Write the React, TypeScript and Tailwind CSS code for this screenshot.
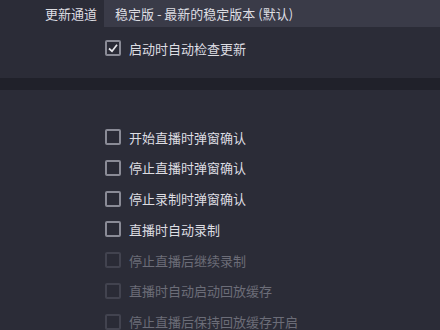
import React from 'react'

const items = [
  { label: '开始直播时弹窗确认', disabled: false },
  { label: '停止直播时弹窗确认', disabled: false },
  { label: '停止录制时弹窗确认', disabled: false },
  { label: '直播时自动录制', disabled: false },
  { label: '停止直播后继续录制', disabled: true },
  { label: '直播时自动启动回放缓存', disabled: true },
  { label: '停止直播后保持回放缓存开启', disabled: true },
]

// Small square checkbox drawn like the OBS dark theme.
function Box({ checked, disabled }: { checked?: boolean; disabled?: boolean }) {
  return (
    <span
      className={`flex h-4 w-4 shrink-0 items-center justify-center rounded-[2px] border-2 ${
        disabled ? 'border-[#42434f] bg-[#2a2b36]' : 'border-[#8a8b96] bg-[#2a2b36]'
      }`}
    >
      {checked && (
        <svg viewBox="0 0 12 12" className="h-3 w-3">
          <polyline points="2,6.5 5,9.2 10,2.8" fill="none" stroke="#e6e6ea" strokeWidth="1.7" />
        </svg>
      )}
    </span>
  )
}

export default function App() {
  return (
    <div
      className="h-[330px] w-[440px] overflow-hidden bg-[#2b2c37] text-[13px] leading-none text-[#dddde2]"
      style={{ fontFamily: '"Noto Sans CJK SC", "Noto Sans", sans-serif' }}
    >
      <section className="h-[78px]">
        <div className="flex h-[27px] items-stretch">
          <div className="flex w-[104px] items-center justify-end pr-[7px]">更新通道</div>
          <div className="flex flex-1 items-center bg-[#3a3b48] pl-[11px]">稳定版 - 最新的稳定版本 (默认)</div>
        </div>
        <div className="mt-[13px] flex h-4 items-center gap-[8px] pl-[105px]">
          <Box checked />
          <span>启动时自动检查更新</span>
        </div>
      </section>
      <div className="h-[12px] bg-[#20212a]" />
      <section className="flex flex-col gap-[14.8px] pl-[105px] pt-[39px]">
        {items.map((item) => (
          <div key={item.label} className="flex h-4 items-center gap-[8px]">
            <Box disabled={item.disabled} />
            <span className={item.disabled ? 'text-[#6c6d78]' : ''}>{item.label}</span>
          </div>
        ))}
      </section>
    </div>
  )
}
